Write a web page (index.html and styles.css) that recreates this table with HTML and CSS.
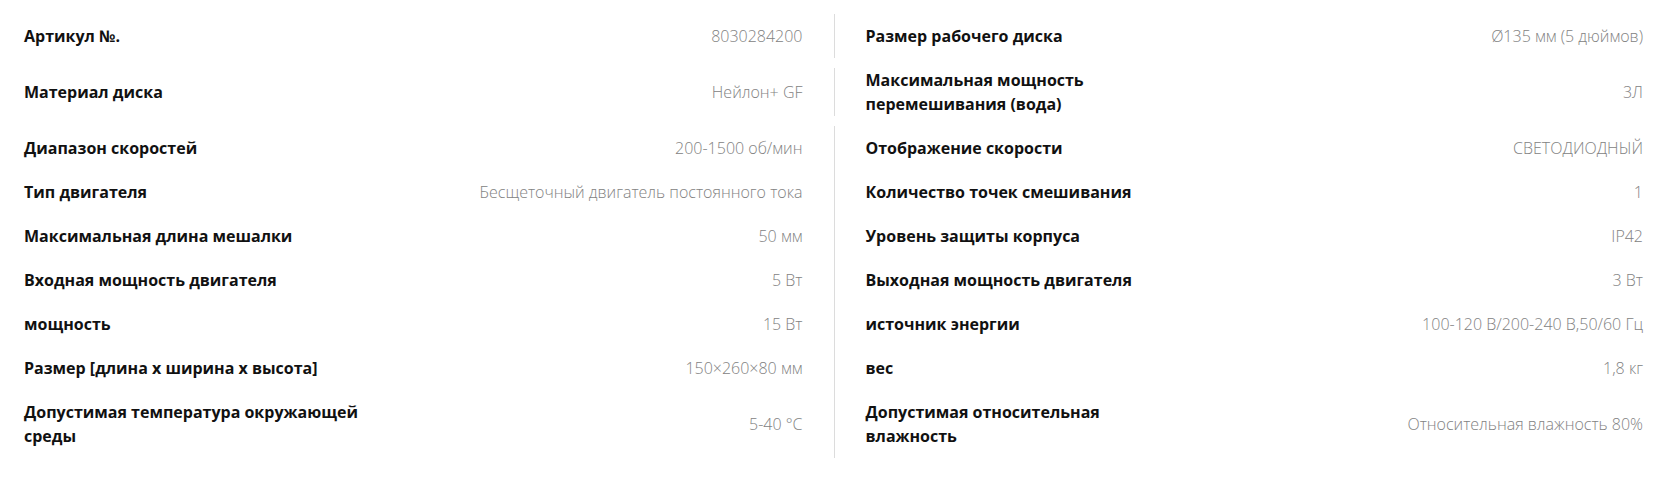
FILE: index.html
```html
<!DOCTYPE html>
<html lang="ru">
<head>
  <meta charset="UTF-8">
  <meta name="viewport" content="width=device-width, initial-scale=1.0">
  <title>Характеристики</title>
  <link rel="stylesheet" href="styles.css">
</head>
<body>
  <div class="specs">
    <div class="spec-row spec-row-spaced">
      <div class="spec-cell">
        <span class="spec-label">Артикул №.</span>
        <span class="spec-value">8030284200</span>
      </div>
      <div class="spec-cell">
        <span class="spec-label">Размер рабочего диска</span>
        <span class="spec-value">Ø135 мм (5 дюймов)</span>
      </div>
    </div>

    <div class="spec-row spec-row-spaced spec-row-tight">
      <div class="spec-cell">
        <span class="spec-label">Материал диска</span>
        <span class="spec-value">Нейлон+ GF</span>
      </div>
      <div class="spec-cell">
        <span class="spec-label spec-label-narrow">Максимальная мощность перемешивания (вода)</span>
        <span class="spec-value">3Л</span>
      </div>
    </div>

    <div class="spec-row">
      <div class="spec-cell">
        <span class="spec-label">Диапазон скоростей</span>
        <span class="spec-value">200-1500 об/мин</span>
      </div>
      <div class="spec-cell">
        <span class="spec-label">Отображение скорости</span>
        <span class="spec-value">СВЕТОДИОДНЫЙ</span>
      </div>
    </div>

    <div class="spec-row">
      <div class="spec-cell">
        <span class="spec-label">Тип двигателя</span>
        <span class="spec-value">Бесщеточный двигатель постоянного тока</span>
      </div>
      <div class="spec-cell">
        <span class="spec-label">Количество точек смешивания</span>
        <span class="spec-value">1</span>
      </div>
    </div>

    <div class="spec-row">
      <div class="spec-cell">
        <span class="spec-label">Максимальная длина мешалки</span>
        <span class="spec-value">50 мм</span>
      </div>
      <div class="spec-cell">
        <span class="spec-label">Уровень защиты корпуса</span>
        <span class="spec-value">IP42</span>
      </div>
    </div>

    <div class="spec-row">
      <div class="spec-cell">
        <span class="spec-label">Входная мощность двигателя</span>
        <span class="spec-value">5 Вт</span>
      </div>
      <div class="spec-cell">
        <span class="spec-label">Выходная мощность двигателя</span>
        <span class="spec-value">3 Вт</span>
      </div>
    </div>

    <div class="spec-row">
      <div class="spec-cell">
        <span class="spec-label">мощность</span>
        <span class="spec-value">15 Вт</span>
      </div>
      <div class="spec-cell">
        <span class="spec-label">источник энергии</span>
        <span class="spec-value">100-120 В/200-240 В,50/60 Гц</span>
      </div>
    </div>

    <div class="spec-row">
      <div class="spec-cell">
        <span class="spec-label">Размер [длина x ширина x высота]</span>
        <span class="spec-value">150×260×80 мм</span>
      </div>
      <div class="spec-cell">
        <span class="spec-label">вес</span>
        <span class="spec-value">1,8 кг</span>
      </div>
    </div>

    <div class="spec-row">
      <div class="spec-cell">
        <span class="spec-label">Допустимая температура окружающей среды</span>
        <span class="spec-value">5-40 °C</span>
      </div>
      <div class="spec-cell">
        <span class="spec-label spec-label-narrow">Допустимая относительная влажность</span>
        <span class="spec-value">Относительная влажность 80%</span>
      </div>
    </div>
  </div>
</body>
</html>
```

FILE: styles.css
```css
* {
  box-sizing: border-box;
  margin: 0;
  padding: 0;
}

body {
  font-family: "Open Sans", "Noto Sans", Arial, sans-serif;
  font-size: 16px;
  line-height: 24px;
  background-color: #ffffff;
  color: #111;
}

.specs {
  padding: 14px 15px 0 24px;
}

.spec-row {
  display: grid;
  grid-template-columns: 1fr 1fr;
}

.spec-row-spaced {
  margin-bottom: 10px;
}

.spec-cell {
  display: flex;
  align-items: center;
  justify-content: space-between;
  gap: 20px;
  padding: 10px 31px 10px 0;
}

.spec-cell + .spec-cell {
  border-left: 1px solid #dcdcdc;
  padding: 10px 0 10px 31px;
}

.spec-row-tight .spec-cell,
.spec-row-tight .spec-cell + .spec-cell {
  padding-top: 0;
  padding-bottom: 0;
}

.spec-label {
  font-weight: 700;
  max-width: 370px;
}

.spec-label-narrow {
  max-width: 260px;
}

.spec-value {
  font-weight: 300;
  color: #828282;
  text-align: right;
  white-space: nowrap;
}
```
